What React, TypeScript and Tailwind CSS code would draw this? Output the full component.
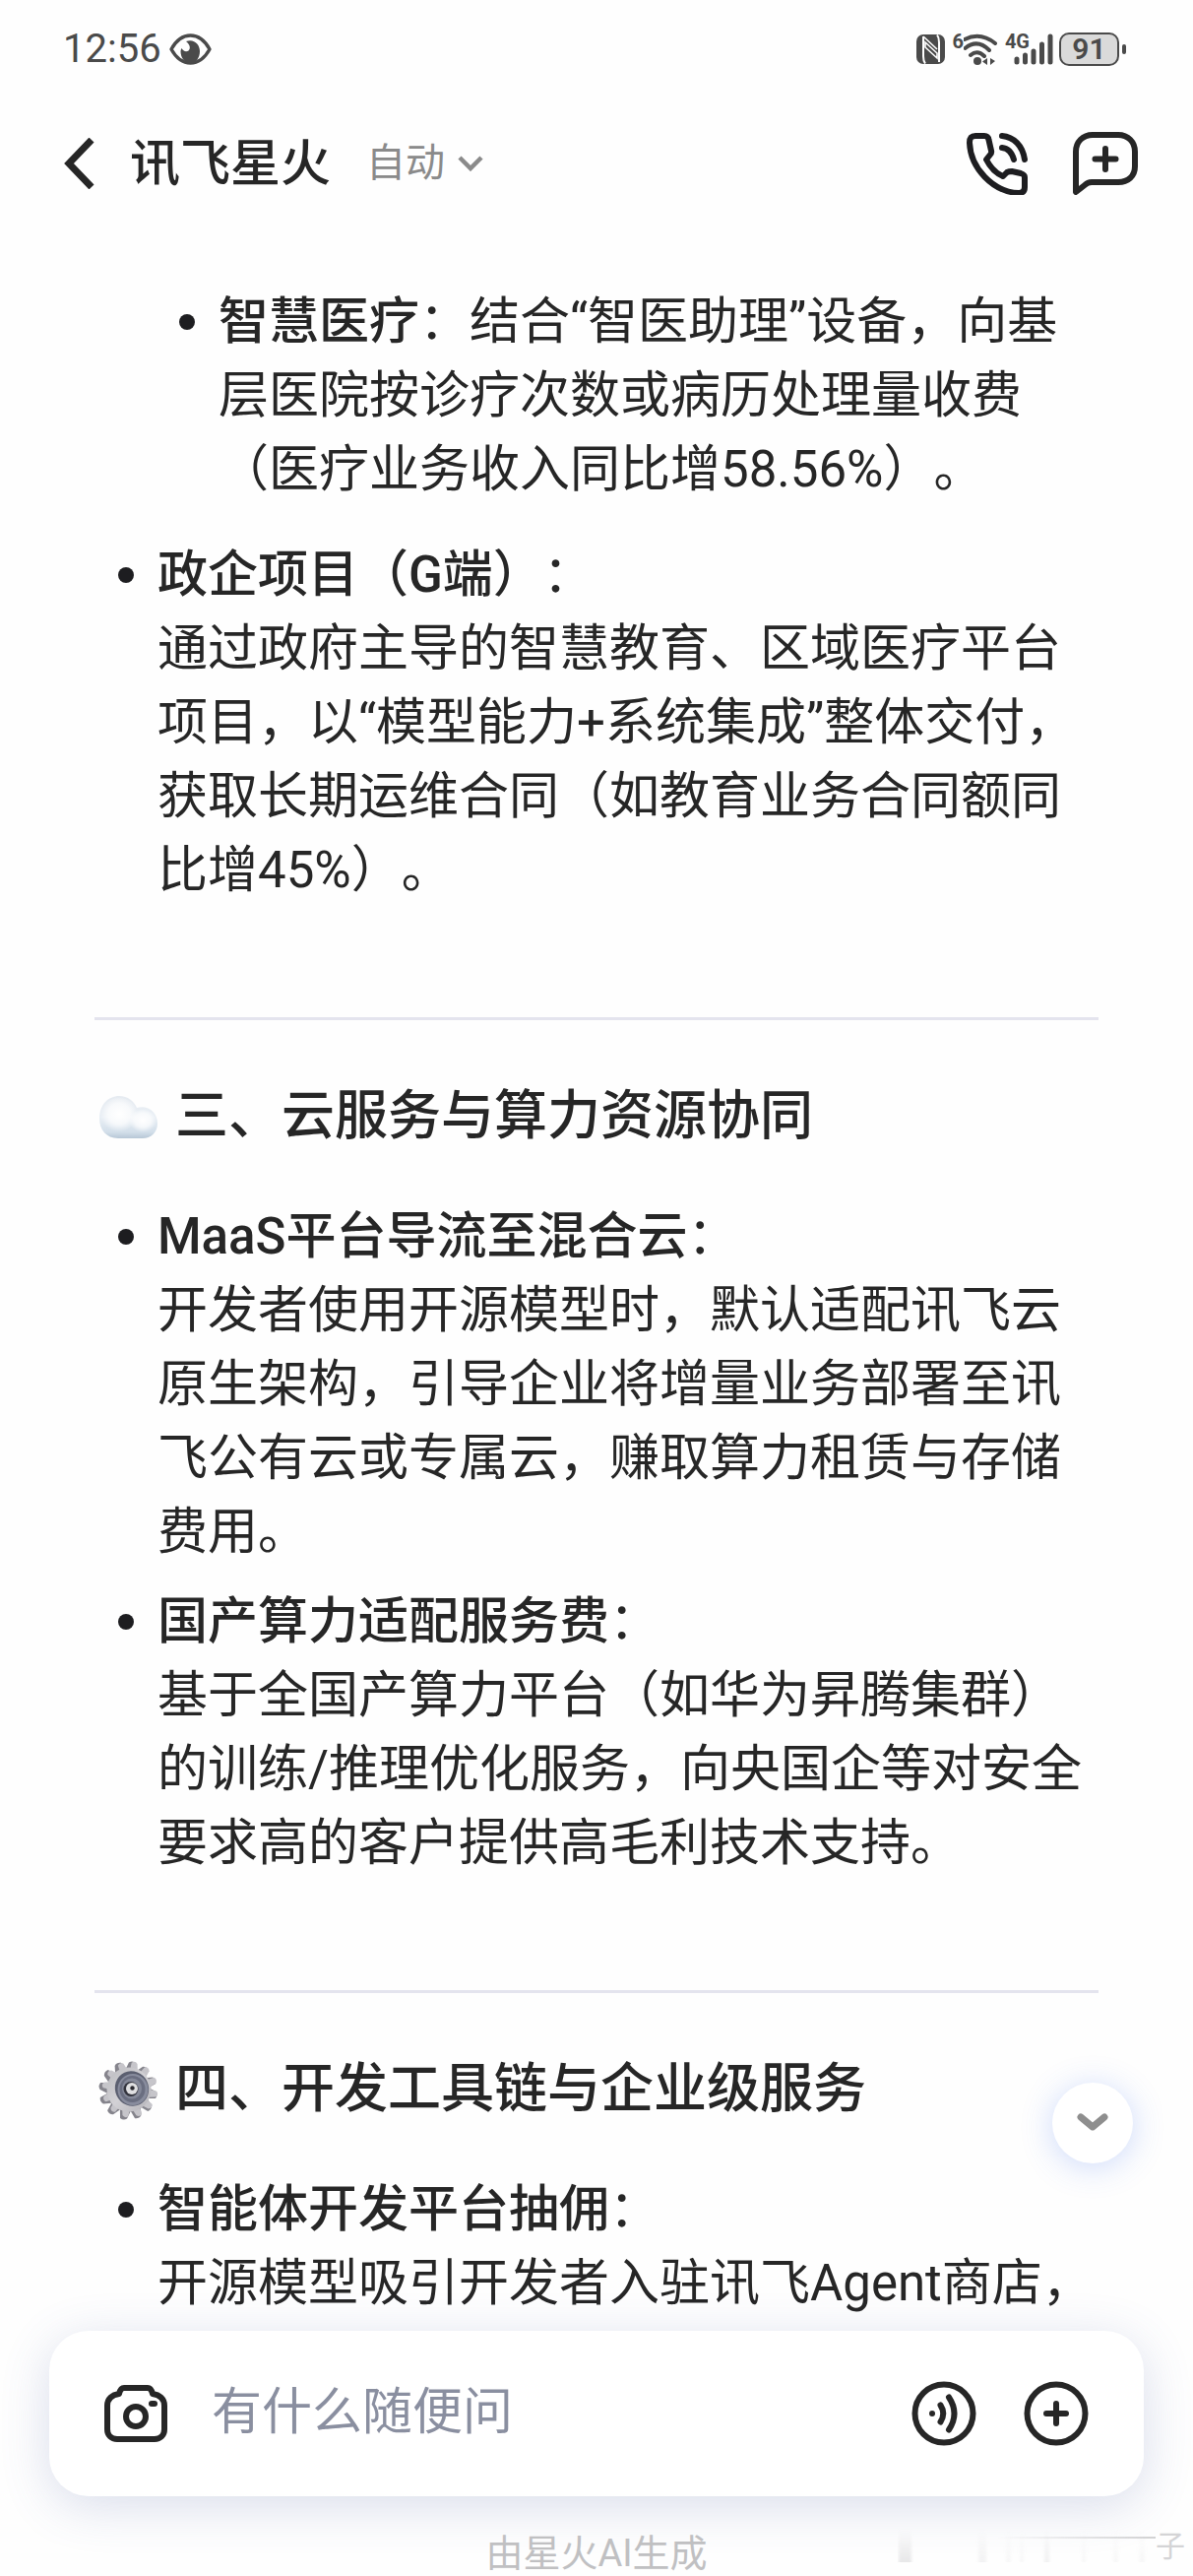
import type { ReactNode } from 'react';

function Cloud() {
  return (
    <svg className="h-[62px] w-[62px]" viewBox="0 0 62 62" fill="none" aria-hidden="true">
      <defs>
        <linearGradient id="cloud-body" x1="0" y1="0" x2="0" y2="1">
          <stop offset="0" stopColor="#e6ebf1" />
          <stop offset="0.5" stopColor="#e9eff5" />
          <stop offset="0.85" stopColor="#d3dfea" />
          <stop offset="1" stopColor="#b7c7d6" />
        </linearGradient>
        <radialGradient id="cloud-shine" cx="0.5" cy="0.45" r="0.5">
          <stop offset="0" stopColor="#ffffff" />
          <stop offset="0.6" stopColor="#ffffff" stopOpacity="0.7" />
          <stop offset="1" stopColor="#ffffff" stopOpacity="0" />
        </radialGradient>
      </defs>
      <path
        d="M20 53C8 53 1 44 1 33C1 19 10 10 21 10C30 10 36 15 39 22C51 19 60 27 60 38C60 47 53 53 45 53Z"
        fill="url(#cloud-body)"
      />
      <ellipse cx="21" cy="30" rx="19" ry="18" fill="url(#cloud-shine)" />
      <ellipse cx="45" cy="36" rx="14" ry="12" fill="url(#cloud-shine)" />
    </svg>
  );
}

const TEETH = [0, 30, 60, 90, 120, 150, 180, 210, 240, 270, 300, 330];

function Gear() {
  return (
    <svg className="h-[62px] w-[62px]" viewBox="0 0 62 62" fill="none" aria-hidden="true">
      <defs>
        <linearGradient id="gear-rim" x1="0" y1="0" x2="1" y2="1">
          <stop offset="0" stopColor="#bcbcc0" />
          <stop offset="0.5" stopColor="#d2d1d5" />
          <stop offset="1" stopColor="#b3b2b8" />
        </linearGradient>
      </defs>
      {TEETH.map((angle) => (
        <path key={angle} d="M23 12L25 4Q28 1 32 3L34 12Z" fill="#85848c" transform={`rotate(${angle + 12} 30 32)`} />
      ))}
      {TEETH.map((angle) => (
        <path key={angle} d="M28 12L28 4Q31 1 34 4L36 12Z" fill="#c6c5ca" transform={`rotate(${angle + 12} 32 31)`} />
      ))}
      <circle cx="31" cy="31" r="22.500" fill="url(#gear-rim)" />
      <ellipse cx="34" cy="30" rx="17" ry="18" fill="#5b5f70" transform="rotate(-25 34 30)" />
      <ellipse cx="35" cy="31" rx="15.500" ry="16" fill="#888c9d" />
      <ellipse cx="34.500" cy="30.500" rx="13" ry="13.500" fill="#6a6e80" />
      <ellipse cx="34" cy="30" rx="10" ry="10.500" fill="#858999" />
      <circle cx="33" cy="30.500" r="7.500" fill="#33343e" />
      <circle cx="34" cy="30" r="6" fill="#e0e0e2" />
      <circle cx="34.500" cy="29.500" r="2.200" fill="#2b2b31" />
    </svg>
  );
}

function StatusBar() {
  return (
    <div className="flex h-25 items-center justify-between pr-[68px] pl-16 text-[#4a4a4a]">
      <div className="flex items-center gap-2">
        <span className="text-[40px] leading-none">12:56</span>
        <svg className="h-8 w-[43px]" viewBox="0 0 43 32" fill="none" aria-hidden="true">
          <path
            d="M2 16C7 7 13 2 21.500 2S36 7 41 16C36 25 30 30 21.500 30S7 25 2 16Z"
            stroke="currentColor"
            strokeWidth="3.400"
            strokeLinejoin="round"
          />
          <path d="M17 8C25 5 31 11 31 18C31 25 27 30 21.500 30C15 30 11.500 24 11.500 18C11.500 17 12 16 12.500 15C14 18 17 19 19.500 17.500C22 15 21 11 17 8Z" fill="currentColor" />
        </svg>
      </div>
      <div className="flex items-center gap-[6px]">
        <svg className="h-[30px] w-[30px]" viewBox="0 0 30 30" fill="none" aria-hidden="true">
          <rect width="29" height="30" rx="7" fill="currentColor" />
          <path d="M7 2V22Q7 27 9 29.500M21 0.500Q23 3 23 8V28" stroke="#fff" strokeWidth="2" />
          <path d="M7 2L21 15M9 8V13L21 24V19Z" stroke="#fff" strokeWidth="1.600" />
        </svg>
        <div className="flex items-start">
          <span className="text-[20px] leading-4 font-bold">6</span>
          <svg className="h-8 w-[36px]" viewBox="0 0 36 32" fill="none" aria-hidden="true">
            <path d="M1 6Q17 -2 32 10M1.500 15Q14 5 26 17M7 22Q14 16 21 23" stroke="currentColor" strokeWidth="4" strokeLinecap="round" />
            <circle cx="14" cy="28" r="4" fill="currentColor" />
            <path d="M24 25V32L19 28.500ZM27 25V32L32 28Z" fill="currentColor" />
          </svg>
        </div>
        <div className="flex items-start">
          <span className="text-[20px] leading-4 font-bold">4G</span>
          <svg className="-ml-4 h-8 w-10" viewBox="0 0 40 32" fill="none" aria-hidden="true">
            <path d="M3 26V29M11.500 22V29M20 18V29M28.500 11V29M37 3V29" stroke="currentColor" strokeWidth="5" strokeLinecap="round" />
          </svg>
        </div>
        <div className="flex items-center gap-[3px]">
          <div className="flex h-[34px] w-[61px] items-center justify-center rounded-[10px] border-2 border-[#4a4a4a] bg-[#dadada] text-[30px] leading-none font-semibold">
            91
          </div>
          <div className="h-[10px] w-1 rounded-full bg-[#4a4a4a]" />
        </div>
      </div>
    </div>
  );
}

function Header() {
  return (
    <header className="flex h-33 items-center justify-between pr-[56px] pl-16 text-[#262626]">
      <div className="flex items-center">
        <button type="button" aria-label="返回" className="mr-8">
          <svg className="h-[52px] w-9" viewBox="0 0 36 52" fill="none" aria-hidden="true">
            <path d="M29 2L6 26L29 50" stroke="currentColor" strokeWidth="7" />
          </svg>
        </button>
        <h1 className="text-[51px] leading-none font-medium">讯飞星火</h1>
        <button type="button" className="ml-9 flex items-center gap-3 text-[40px] leading-none text-[#8a8a8a]">
          自动
          <svg className="h-4 w-7" viewBox="0 0 28 16" fill="none" aria-hidden="true">
            <path d="M3 2L14 13L25 2" stroke="currentColor" strokeWidth="4.500" />
          </svg>
        </button>
      </div>
      <div className="flex items-center gap-11">
        <button type="button" aria-label="语音通话">
          <svg className="h-16 w-16" viewBox="0 0 64 64" fill="none" stroke="#1d1d20" strokeWidth="6" strokeLinecap="round" strokeLinejoin="round" aria-hidden="true">
            <path d="M9 4H18C20 4 22 5 22.500 8L25 19C25.500 21 25 22 24 23L20 28C24 36 30 42 37 45L41 41C43 40 44 40 46 40L55 42C58 43 59 44 59 46V56C59 60 57 62 53 62C27 61 4 37 3 11C3 6 5 4 9 4Z" />
            <path d="M36 4C48 5 57 14 59 28M36 16C42 16.500 46 21 48 28" />
          </svg>
        </button>
        <button type="button" aria-label="新建对话">
          <svg className="h-16 w-[66px]" viewBox="0 0 66 64" fill="none" stroke="currentColor" strokeWidth="6" strokeLinecap="round" strokeLinejoin="round" aria-hidden="true">
            <path d="M20 3H46C56 3 63 10 63 20V35C63 45 56 51 46 51H19C16 51 14 52 12 54L3 61V20C3 10 10 3 20 3Z" />
            <path d="M33 17V38M22.500 27.500H43.500" />
          </svg>
        </button>
      </div>
    </header>
  );
}

function SectionTitle({ icon, children }: { icon: ReactNode; children: ReactNode }) {
  return (
    <h2 className="flex items-center gap-4 pl-1 text-[54px] leading-20 font-medium">
      {icon}
      {children}
    </h2>
  );
}

function Item({ title, children }: { title: string; children: ReactNode }) {
  return (
    <li className="flex">
      <span className="mt-[30px] mr-6 h-4 w-4 shrink-0 rounded-full bg-[#1d1d20]" />
      <div>
        <p>
          <strong className="font-medium">{title}</strong>：
        </p>
        <p>{children}</p>
      </div>
    </li>
  );
}

function Answer() {
  return (
    <article className="px-24 pt-[57px] text-[51px] leading-[75px] text-[#262626]">
      <ul className="pl-[86px]">
        <li className="flex">
          <span className="mt-[30px] mr-6 h-4 w-4 shrink-0 rounded-full bg-[#1d1d20]" />
          <p>
            <strong className="font-medium">智慧医疗</strong>
            ：结合“智医助理”设备，向基层医院按诊疗次数或病历处理量收费（医疗业务收入同比增58.56%）。
          </p>
        </li>
      </ul>
      <ul className="mt-8 pl-6">
        <Item title="政企项目（G端）">
          通过政府主导的智慧教育、区域医疗平台项目，以“模型能力+系统集成”整体交付，获取长期运维合同（如教育业务合同额同比增45%）。
        </Item>
      </ul>

      <hr className="mt-28 border-t-[3px] border-[#e4e4ee]" />

      <section className="pt-[58px]">
        <SectionTitle icon={<Cloud />}>三、云服务与算力资源协同</SectionTitle>
        <ul className="mt-[44px] flex flex-col gap-4 pl-6">
          <Item title="MaaS平台导流至混合云">
            开发者使用开源模型时，默认适配讯飞云原生架构，引导企业将增量业务部署至讯飞公有云或专属云，赚取算力租赁与存储费用。
          </Item>
          <Item title="国产算力适配服务费">
            基于全国产算力平台（如华为昇腾集群）的训练/推理优化服务，向央国企等对安全要求高的客户提供高毛利技术支持。
          </Item>
        </ul>
      </section>

      <hr className="mt-28 border-t-[3px] border-[#e4e4ee]" />

      <section className="pt-[58px]">
        <SectionTitle icon={<Gear />}>四、开发工具链与企业级服务</SectionTitle>
        <ul className="mt-[44px] pl-6">
          <Item title="智能体开发平台抽佣">开源模型吸引开发者入驻讯飞Agent商店，</Item>
        </ul>
      </section>
    </article>
  );
}

// Faint mark with its trail in the bottom right corner
function CornerMark() {
  return (
    <div className="absolute right-2 bottom-3 flex items-center">
      <svg className="h-9 w-[262px] opacity-60" viewBox="0 0 262 36" fill="none" aria-hidden="true">
        <defs>
          <linearGradient id="trail-v" x1="0" y1="0" x2="0" y2="1">
            <stop offset="0" stopColor="#d8d8da" stopOpacity="0" />
            <stop offset="1" stopColor="#d8d8da" />
          </linearGradient>
          <linearGradient id="trail-h" x1="0" y1="0" x2="1" y2="0">
            <stop offset="0" stopColor="#b4b4b6" stopOpacity="0" />
            <stop offset="1" stopColor="#b4b4b6" />
          </linearGradient>
          <filter id="trail-soft" x="-5%" y="-20%" width="110%" height="140%">
            <feGaussianBlur stdDeviation="1.500 0.5" />
          </filter>
        </defs>
        <g fill="url(#trail-v)" filter="url(#trail-soft)">
          <rect x="1" y="0" width="13" height="34" />
          <rect x="82" y="0" width="8" height="34" opacity="0.5" />
          <rect x="110" y="0" width="5" height="34" opacity="0.3" />
          <rect x="124" y="0" width="4" height="34" opacity="0.3" />
          <rect x="149" y="0" width="5" height="34" opacity="0.6" />
          <rect x="187" y="0" width="4" height="34" opacity="0.3" />
          <rect x="219" y="0" width="5" height="34" opacity="0.3" />
          <rect x="245" y="0" width="6" height="34" opacity="0.3" />
        </g>
        <rect x="100" y="8" width="162" height="2" fill="url(#trail-h)" />
      </svg>
      <span className="text-[30px] leading-9 text-[#d4d4d6]">子</span>
    </div>
  );
}

function Composer() {
  return (
    <footer className="relative px-[50px]">
      <button
        type="button"
        aria-label="滚动到底部"
        className="absolute right-[61px] bottom-full mb-[170px] flex h-[82px] w-[82px] items-center justify-center rounded-full bg-white shadow-[0_4px_32px_rgba(60,110,240,0.25)]"
      >
        <svg className="h-5 w-8" viewBox="0 0 32 20" fill="none" aria-hidden="true">
          <path d="M4 4L16 14L28 4" stroke="#8e8e8e" strokeWidth="7" strokeLinecap="round" strokeLinejoin="round" />
        </svg>
      </button>
      <form className="flex h-[168px] items-center rounded-[40px] bg-white pr-[56px] pl-[55px] text-[#262626] shadow-[0_10px_50px_rgba(70,90,160,0.2)]">
        <button type="button" aria-label="拍照">
          <svg className="h-[60px] w-[66px]" viewBox="0 0 66 60" fill="none" stroke="currentColor" strokeWidth="6" strokeLinejoin="round" aria-hidden="true">
            <path d="M21 4H45C48 4 49 6 50 10C57 11 62 15 62 22V46C62 52 58 56 52 56H14C8 56 4 52 4 46V22C4 15 9 11 16 10C17 6 18 4 21 4Z" />
            <circle cx="33" cy="33" r="10" />
            <path d="M49 20H52" strokeLinecap="round" />
          </svg>
        </button>
        <input
          type="text"
          aria-label="有什么随便问"
          placeholder="有什么随便问"
          className="ml-[44px] h-20 min-w-0 flex-1 bg-transparent pb-1 text-[51px] outline-none placeholder:text-[#8a8fa0]"
        />
        <button type="button" aria-label="语音输入" className="mr-12">
          <svg className="h-[66px] w-[66px]" viewBox="0 0 66 66" fill="none" stroke="currentColor" strokeWidth="6" strokeLinecap="round" aria-hidden="true">
            <circle cx="33" cy="33" r="29.500" />
            <circle cx="21" cy="33" r="3" fill="currentColor" stroke="none" />
            <path d="M29.500 24.500Q35 33 29.500 41.500M38 16.500Q49 33 38 49.500" />
          </svg>
        </button>
        <button type="button" aria-label="更多">
          <svg className="h-[66px] w-[66px]" viewBox="0 0 66 66" fill="none" stroke="currentColor" strokeWidth="6" strokeLinecap="round" aria-hidden="true">
            <circle cx="33" cy="33" r="29.500" />
            <path d="M33 23V43M23 33H43" />
          </svg>
        </button>
      </form>
      <p className="pt-9 pb-px text-center text-[38px] leading-11 text-[#c0c0c2]">由星火AI生成</p>
      <CornerMark />
    </footer>
  );
}

export default function App() {
  return (
    <div className="flex h-screen flex-col overflow-hidden bg-[#fefefe] font-[Roboto,'Noto_Sans_CJK_SC',sans-serif] [text-spacing-trim:space-all]">
      <StatusBar />
      <Header />
      <main className="min-h-0 flex-1 overflow-hidden">
        <Answer />
      </main>
      <Composer />
    </div>
  );
}
